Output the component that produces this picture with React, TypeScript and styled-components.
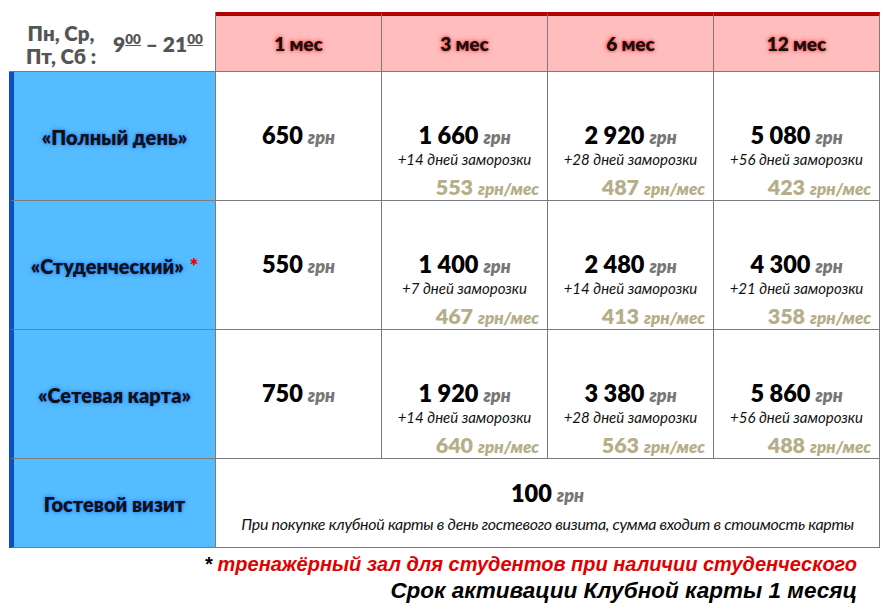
import styled, { createGlobalStyle } from "styled-components";

const GlobalStyle = createGlobalStyle`
  body {
    margin: 0;
    background: #fff;
    font-family: Lato, "Open Sans", sans-serif;
  }
`;

const LINE = "#7b7b7b";

type Plan = {
  name: string;
  star?: boolean;
  month: string;
  cells: { price: string; freeze: string; perMonth: string }[];
};

const plans: Plan[] = [
  {
    name: "«Полный день»",
    month: "650",
    cells: [
      { price: "1 660", freeze: "+14 дней заморозки", perMonth: "553" },
      { price: "2 920", freeze: "+28 дней заморозки", perMonth: "487" },
      { price: "5 080", freeze: "+56 дней заморозки", perMonth: "423" },
    ],
  },
  {
    name: "«Студенческий»",
    star: true,
    month: "550",
    cells: [
      { price: "1 400", freeze: "+7 дней заморозки", perMonth: "467" },
      { price: "2 480", freeze: "+14 дней заморозки", perMonth: "413" },
      { price: "4 300", freeze: "+21 дней заморозки", perMonth: "358" },
    ],
  },
  {
    name: "«Сетевая карта»",
    month: "750",
    cells: [
      { price: "1 920", freeze: "+14 дней заморозки", perMonth: "640" },
      { price: "3 380", freeze: "+28 дней заморозки", perMonth: "563" },
      { price: "5 860", freeze: "+56 дней заморозки", perMonth: "488" },
    ],
  },
];

const Page = styled.div`
  padding: 12px 0 0 9px;
  width: 888px;
  box-sizing: border-box;
`;

const Table = styled.div`
  display: grid;
  grid-template-columns: 207px repeat(4, 166px);
  grid-template-rows: 60px 129px 129px 129px 89px;
`;

const Corner = styled.div`
  display: flex;
  align-items: center;
  gap: 17px;
  padding: 6px 0 0 17px;
  border-right: 1px solid ${LINE};
  border-bottom: 1px solid ${LINE};
  box-sizing: border-box;
  color: #555;
  font-weight: 800;
`;

const Days = styled.div`
  font-size: 20.5px;
  line-height: 23px;
  text-align: center;
`;

const Hours = styled.div`
  font-size: 21px;
  white-space: nowrap;
  margin-top: -2px;

  sup {
    font-size: 13.5px;
    text-decoration: underline;
    vertical-align: 8px;
    line-height: 0;
  }
`;

const Head = styled.div`
  display: flex;
  align-items: center;
  justify-content: center;
  background: #ffbdbd;
  border-top: 4px solid #b30000;
  border-right: 1px solid ${LINE};
  border-bottom: 1px solid ${LINE};
  box-sizing: border-box;
  font-size: 19px;
  font-weight: 800;
  color: #111;
  text-shadow: 0 0 3px #ff4040, 0 0 5px #ff5a5a;
  padding-bottom: 1px;
`;

const Label = styled.div`
  display: flex;
  align-items: center;
  justify-content: center;
  background: #55bcff;
  border-left: 5px solid #0a4fc4;
  border-right: 1px solid ${LINE};
  border-bottom: 1px solid ${LINE};
  box-sizing: border-box;
  font-size: 20px;
  font-weight: 800;
  color: #111;
  text-shadow: 0 0 3px #1f7dff, 0 0 5px #3a90ff;
  padding-top: 1px;
`;

const Star = styled.span`
  color: #e00000;
  margin-left: 6px;
  text-shadow: none;
`;

const Cell = styled.div<{ $wide?: boolean }>`
  grid-column: ${(p) => (p.$wide ? "span 4" : "auto")};
  display: flex;
  flex-direction: column;
  align-items: center;
  padding-top: ${(p) => (p.$wide ? "21px" : "50px")};
  border-right: 1px solid ${LINE};
  border-bottom: 1px solid ${LINE};
  box-sizing: border-box;
`;

const Price = styled.div`
  font-size: 23.5px;
  line-height: 27px;
  font-weight: 800;
  color: #000;
  white-space: nowrap;
`;

const Unit = styled.span`
  font-size: 18px;
  font-style: italic;
  font-weight: 800;
  color: #777;
  margin-left: 5px;
`;

const Freeze = styled.div`
  font-size: 15px;
  line-height: 18px;
  font-style: italic;
  color: #111;
  white-space: nowrap;
  margin-top: -1px;
`;

const PerMonth = styled.div`
  align-self: flex-end;
  margin: 7px 8px 0 0;
  font-size: 21.5px;
  line-height: 25px;
  font-weight: 800;
  color: #b5ae88;
  white-space: nowrap;

  span {
    font-size: 17px;
    font-style: italic;
    margin-left: 5px;
  }
`;

const Note = styled.div`
  margin-top: 5px;
  font-size: 16px;
  font-style: italic;
  color: #111;
  white-space: nowrap;
  letter-spacing: -0.3px;
`;

const Footer = styled.div`
  padding: 4px 31px 0 0;
  text-align: right;
  font-family: "Liberation Sans", Arial, sans-serif;
  font-weight: 700;
  font-style: italic;
`;

const Remark = styled.div`
  font-size: 20px;
  line-height: 25px;
  color: #e00000;

  b {
    color: #000;
  }
`;

const Activation = styled.div`
  font-size: 22.5px;
  line-height: 27px;
  color: #000;
`;

export default function App() {
  return (
    <Page>
      <GlobalStyle />
      <Table>
        <Corner>
          <Days>
            Пн, Ср,
            <br />
            Пт, Сб :
          </Days>
          <Hours>
            9<sup>00</sup> – 21<sup>00</sup>
          </Hours>
        </Corner>
        <Head>1 мес</Head>
        <Head>3 мес</Head>
        <Head>6 мес</Head>
        <Head>12 мес</Head>

        {plans.map((plan) => (
          <>
            <Label key={plan.name}>
              {plan.name}
              {plan.star && <Star>*</Star>}
            </Label>
            <Cell>
              <Price>
                {plan.month}
                <Unit>грн</Unit>
              </Price>
            </Cell>
            {plan.cells.map((c) => (
              <Cell key={c.price}>
                <Price>
                  {c.price}
                  <Unit>грн</Unit>
                </Price>
                <Freeze>{c.freeze}</Freeze>
                <PerMonth>
                  {c.perMonth}
                  <span>грн/мес</span>
                </PerMonth>
              </Cell>
            ))}
          </>
        ))}

        <Label>Гостевой визит</Label>
        <Cell $wide>
          <Price>
            100
            <Unit>грн</Unit>
          </Price>
          <Note>
            При покупке клубной карты в день гостевого визита, сумма входит в
            стоимость карты
          </Note>
        </Cell>
      </Table>
      <Footer>
        <Remark>
          <b>*</b> тренажёрный зал для студентов при наличии студенческого
        </Remark>
        <Activation>Срок активации Клубной карты 1 месяц</Activation>
      </Footer>
    </Page>
  );
}
